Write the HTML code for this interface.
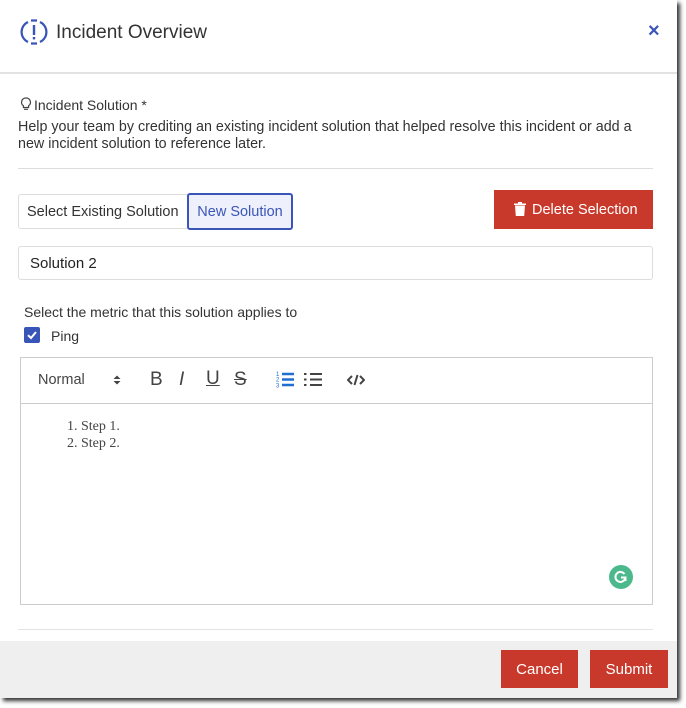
<!DOCTYPE html>
<html><head><style>
*{box-sizing:border-box;margin:0;padding:0}
body{width:686px;height:708px;background:#fff;font-family:"Liberation Sans",sans-serif;position:relative;overflow:hidden;color:#333}
.modal{position:absolute;left:0;top:0;width:677px;height:698px;background:#fff;box-shadow:3px 3px 4px #333}
.abs{position:absolute}
.t{font-size:14px;color:#333}
</style></head><body>
<div class="modal">
  <svg class="abs" style="left:20px;top:18px" width="28" height="28" viewBox="0 0 28 28">
    <path d="M8 4 A11 11 0 0 0 8 24" fill="none" stroke="#3a55b8" stroke-width="2.2"/>
    <path d="M20 4 A11 11 0 0 1 20 24" fill="none" stroke="#3a55b8" stroke-width="2.2"/>
    <path d="M11 2.5 h6 M11 25.5 h6" stroke="#3a55b8" stroke-width="2.2"/>
    <rect x="12.8" y="7" width="2.4" height="10" fill="#3a55b8"/>
    <rect x="12.8" y="19" width="2.4" height="2.4" fill="#3a55b8"/>
  </svg>
  <div class="abs" style="left:56px;top:22px;font-size:19px;color:#333">Incident Overview</div>
  <div class="abs" style="left:648px;top:20px;font-size:20px;color:#3a55b8;font-weight:bold">×</div>
  <div class="abs" style="left:0;top:72px;width:677px;height:2px;background:#e2e2e2"></div>

  <svg class="abs" style="left:20px;top:97px" width="12" height="14" viewBox="0 0 12 14"><path d="M6 1 A4.3 4.3 0 0 0 3.4 8.8 V10.5 H8.6 V8.8 A4.3 4.3 0 0 0 6 1Z M4 12.3 H8" fill="none" stroke="#444" stroke-width="1.2"/></svg>
  <div class="abs t" style="left:34px;top:97px">Incident Solution *</div>
  <div class="abs t" style="left:18px;top:119px;line-height:17px;width:630px;font-size:14.3px">Help your team by crediting an existing incident solution that helped resolve this incident or add a new incident solution to reference later.</div>
  <div class="abs" style="left:18px;top:168px;width:635px;height:1px;background:#ddd"></div>

  <div class="abs t" style="left:18px;top:194px;width:170px;height:35px;border:1px solid #ddd;border-radius:3px 0 0 3px;line-height:35px;padding-left:8px;font-size:14.5px">Select Existing Solution</div>
  <div class="abs" style="left:187px;top:193px;width:106px;height:37px;border:2px solid #3a55b8;border-radius:3px;background:#eef0fb;color:#3a55b8;line-height:35px;text-align:center;font-size:14.5px">New Solution</div>
  <div class="abs" style="left:494px;top:190px;width:159px;height:39px;background:#c9392b;color:#fff;line-height:41px;font-size:14.5px">
    <svg class="abs" style="left:20px;top:12px" width="12" height="14" viewBox="0 0 12 14"><path d="M0 1.5 H12 V3 H0Z M4 0 H8 V1.5 H4Z M1 3.5 H11 L10.2 14 H1.8Z" fill="#fff"/></svg>
    <span style="position:absolute;left:38px">Delete Selection</span></div>

  <div class="abs" style="left:18px;top:246px;width:635px;height:34px;border:1px solid #ddd;border-radius:3px;line-height:34px;padding-left:11px;font-size:15px;color:#222">Solution 2</div>

  <div class="abs t" style="left:24px;top:304px">Select the metric that this solution applies to</div>
  <div class="abs" style="left:24px;top:327px;width:16px;height:16px;background:#3a55b8;border-radius:2px"><svg width="16" height="16" viewBox="0 0 16 16"><path d="M4 8.2 L7 11 L12 5" fill="none" stroke="#fff" stroke-width="2"/></svg></div>
  <div class="abs t" style="left:51px;top:328px">Ping</div>

  <div class="abs" style="left:20px;top:357px;width:633px;height:248px;border:1px solid #ccc"></div>
  <div class="abs" style="left:20px;top:403px;width:633px;height:1px;background:#ccc"></div>
  <div class="abs" style="left:38px;top:372px;font-size:14.5px;color:#444">Normal</div>
  <svg class="abs" style="left:112px;top:374px" width="10" height="12" viewBox="0 0 10 12"><path d="M1.5 5 L5 1.5 L8.5 5Z M1.5 7 L5 10.5 L8.5 7Z" fill="#444"/></svg>
  <div class="abs" style="left:150px;top:369px;font-size:19px;color:#444">B</div>
  <div class="abs" style="left:179px;top:369px;font-size:19px;color:#444;font-style:italic">I</div>
  <div class="abs" style="left:206px;top:368px;font-size:19px;color:#444;text-decoration:underline">U</div>
  <div class="abs" style="left:234px;top:369px;font-size:19px;color:#444;text-decoration:line-through">S</div>
  <svg class="abs" style="left:276px;top:371px" width="18" height="17" viewBox="0 0 18 17"><path d="M6 3 H18 M6 8.5 H18 M6 14 H18" stroke="#1e6fd0" stroke-width="2.4"/><text x="0" y="5" font-size="6" fill="#1e6fd0">1</text><text x="0" y="10.5" font-size="6" fill="#1e6fd0">2</text><text x="0" y="16.5" font-size="6" fill="#1e6fd0">3</text></svg>
  <svg class="abs" style="left:304px;top:371px" width="18" height="17" viewBox="0 0 18 17"><path d="M6 3 H18 M6 8.5 H18 M6 14 H18 M0 3 H2.5 M0 8.5 H2.5 M0 14 H2.5" stroke="#444" stroke-width="2"/></svg>
  <svg class="abs" style="left:347px;top:374px" width="18" height="12" viewBox="0 0 18 12"><path d="M5 2 L1 6 L5 10 M13 2 L17 6 L13 10 M10.5 1 L7.5 11" fill="none" stroke="#444" stroke-width="2"/></svg>
  <div class="abs" style="left:67px;top:418px;font-family:'Liberation Serif',serif;font-size:14px;color:#444;line-height:17px">1. Step 1.<br>2. Step 2.</div>
  <div class="abs" style="left:609px;top:565px;width:24px;height:24px;border-radius:50%;background:#4cb98d"><svg width="24" height="24" viewBox="0 0 24 24"><path d="M15.5 9 A5 5 0 1 0 16 14 M12 12.5 H16.5 V16" fill="none" stroke="#fff" stroke-width="2"/></svg></div>
  <div class="abs" style="left:18px;top:629px;width:635px;height:1px;background:#e3e3e3"></div>

  <div class="abs" style="left:0;top:641px;width:677px;height:57px;background:#efeff0"></div>
  <div class="abs" style="left:501px;top:650px;width:77px;height:38px;background:#c9392b;color:#fff;text-align:center;line-height:39px;font-size:15px">Cancel</div>
  <div class="abs" style="left:590px;top:650px;width:78px;height:38px;background:#c9392b;color:#fff;text-align:center;line-height:39px;font-size:15px">Submit</div>
</div>
</body></html>
